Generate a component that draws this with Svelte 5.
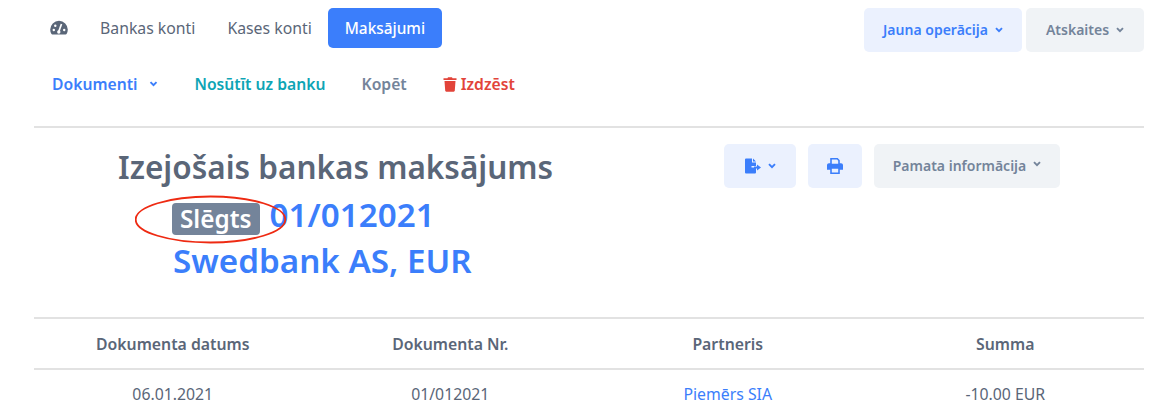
<script>
  const headers = ['Dokumenta datums', 'Dokumenta Nr.', 'Partneris', 'Summa'];
</script>

<div class="page">
  <nav class="top">
    <div class="tabs">
      <a class="tab icon-tab" href="#d" aria-label="Panelis">
        <svg width="18" height="16" viewBox="0 0 18 16"><path fill="#5a6678" d="M9 .8a8.800 8.800 0 0 0-8.800 8.800c0 1.700.45 3.200 1.250 4.500.2.300.5.500.9.500h13.300c.4 0 .7-.2.9-.5.8-1.300 1.250-2.800 1.250-4.500A8.800 8.800 0 0 0 9 .8z"/><circle cx="3.800" cy="10" r="1.200" fill="#fff"/><circle cx="5.300" cy="5.800" r="1.200" fill="#fff"/><circle cx="14.200" cy="10" r="1.200" fill="#fff"/><path d="M8.800 11.500 L11.500 4" stroke="#fff" stroke-width="1.700"/><circle cx="8.800" cy="12" r="1.700" fill="#fff"/></svg>
      </a>
      <a class="tab bank-tab" href="#b">Bankas konti</a>
      <a class="tab cash-tab" href="#k">Kases konti</a>
      <a class="tab active" href="#m">Maksājumi</a>
    </div>
    <div class="top-actions">
      <button class="btn light-blue wide"><span class="lift">Jauna operācija</span> <svg class="chev" width="8" height="6" viewBox="0 0 8 6"><path d="M1 1.200l3 3 3-3" fill="none" stroke="currentColor" stroke-width="1.900"/></svg></button>
      <button class="btn light-grey narrow"><span class="lift">Atskaites</span> <svg class="chev" width="8" height="6" viewBox="0 0 8 6"><path d="M1 1.200l3 3 3-3" fill="none" stroke="currentColor" stroke-width="1.900"/></svg></button>
    </div>
  </nav>

  <div class="subnav">
    <a href="#doc" class="blue">Dokumenti <svg class="chev doc" width="9" height="6" viewBox="0 0 8 6"><path d="M1 1.200l3 3 3-3" fill="none" stroke="currentColor" stroke-width="1.900"/></svg></a>
    <a href="#send" class="teal">Nosūtīt uz banku</a>
    <a href="#copy" class="grey">Kopēt</a>
    <a href="#del" class="red"><svg width="14" height="16" viewBox="0 0 14 16"><path fill="currentColor" d="M.5 2.300h4l.5-1.100h4l.5 1.100h4v1.700H.5zM1.500 5h11l-.7 9.600c0 .6-.5 1.100-1.100 1.100H3.300c-.6 0-1.100-.5-1.100-1.100z"/></svg>Izdzēst</a>
  </div>

  <section class="head">
    <div class="title">
      <h1>Izejošais bankas maksājums</h1>
      <div class="ref">
        <span class="badge">Slēgts</span>
        <a href="#n">01/012021</a>
        <svg class="ring" width="153" height="49" viewBox="0 0 153 49"><ellipse cx="75.500" cy="24.500" rx="74.800" ry="23" fill="none" stroke="#ee2a12" stroke-width="1.800"/></svg>
      </div>
      <div class="bank"><a href="#s">Swedbank AS, EUR</a></div>
    </div>
    <div class="head-actions">
      <button class="btn light-blue export" aria-label="Eksportēt">
        <svg width="17" height="16" viewBox="0 0 17 15"><path fill="currentColor" d="M0 1a1 1 0 0 1 1-1h6v4h4v3.500H6.500v1.500H11v5a1 1 0 0 1-1 1H1a1 1 0 0 1-1-1zM8 0l3 3H8zM12 6l4 3-4 3v-2H9V8h3z"/></svg>
        <svg class="chev" width="8" height="6" viewBox="0 0 8 6"><path d="M1 1.200l3 3 3-3" fill="none" stroke="currentColor" stroke-width="1.900"/></svg>
      </button>
      <button class="btn light-blue print" aria-label="Drukāt">
        <svg width="16" height="16" viewBox="0 0 15 15"><path fill="currentColor" fill-rule="evenodd" d="M3 0h7l2 2v3h1.200c1 0 1.800.8 1.800 1.800V11h-3v4H3v-4H0V6.800C0 5.800.8 5 1.800 5H3zM4.500 1.500V5.500h6V2.600L9.400 1.500zM4.500 10v3.500h6V10z"/></svg>
      </button>
      <button class="btn light-grey info"><span class="lift">Pamata informācija</span> <svg class="chev up" width="8" height="6" viewBox="0 0 8 6"><path d="M1 1.200l3 3 3-3" fill="none" stroke="currentColor" stroke-width="1.900"/></svg></button>
    </div>
  </section>

  <table>
    <thead>
      <tr>{#each headers as h}<th>{h}</th>{/each}</tr>
    </thead>
    <tbody>
      <tr>
        <td>06.01.2021</td>
        <td>01/012021</td>
        <td><a href="#p">Piemērs SIA</a></td>
        <td>-10.00 EUR</td>
      </tr>
    </tbody>
  </table>
</div>

<style>
  :global(body) {
    margin: 0;
    background: #fff;
    font-family: "Noto Sans", "Open Sans", sans-serif;
    color: #5a6678;
    overflow: hidden;
  }
  a { text-decoration: none; color: inherit; }
  .page { width: 1150px; height: 418px; padding: 8px 6px 0 34px; box-sizing: border-box; overflow: hidden; }
  .top { display: flex; justify-content: space-between; align-items: flex-start; }
  .tabs { display: flex; }
  .tab { height: 40px; padding: 0 17px; display: flex; align-items: center; font-size: 15.800px; border-radius: 5px; color: #5a6678; }
  .icon-tab { padding: 0 16px; }
  .bank-tab { padding: 0 16px; }
  .cash-tab { padding: 0 16px; }
  .active { background: #3b7efb; color: #fff; font-weight: 500; font-size: 15.400px; }
  .top-actions { display: flex; gap: 4px; }
  .btn { border: 0; border-radius: 5px; font: inherit; font-weight: 600; font-size: 14px; display: flex; align-items: center; justify-content: center; padding: 0; }
  .lift { margin-top: -2px; }
  .light-blue { background: #ebf1fe; color: #3b7efb; }
  .light-grey { background: #f0f3f6; color: #74849a; }
  .wide { width: 158px; height: 44px; gap: 7px; }
  .narrow { width: 118px; height: 44px; gap: 7px; }
  .subnav { display: flex; align-items: center; height: 34px; margin-top: 15px; font-size: 15.700px; font-weight: 600; padding-left: 18px; gap: 36px; }
  .subnav a { display: flex; align-items: center; }
  .blue { color: #3b7efb; }
  .teal { color: #0ea5b5; }
  .grey { color: #74849a; }
  .red { color: #e2443a; gap: 4px; }
  .doc { margin-left: 12px; }
  .head { border-top: 2px solid #e2e2e2; margin-top: 25px; height: 191px; display: flex; box-sizing: border-box; }
  .title { width: 606px; padding: 18px 0 0 84px; box-sizing: border-box; }
  h1 { margin: 0; font-size: 31.500px; line-height: 42px; font-weight: 600; color: #5a6678; }
  .ref, .bank { font-size: 33.200px; font-weight: 600; line-height: 46px; color: #3b7efb; padding-left: 55px; }
  .ref { position: relative; display: flex; align-items: center; height: 46px; margin-top: 4px; gap: 10px; }
  .badge { background: #74849a; color: #fff; font-size: 24.300px; border-radius: 4px; padding: 0 8px; line-height: 32px; margin: 7px 0 0 -1px; }
  .ring { position: absolute; left: 17px; top: 3px; }
  .head-actions { display: flex; gap: 12px; padding: 16px 0 0 84px; }
  .head-actions .btn { height: 44px; }
  .export { width: 72px; gap: 6px; }
  .print { width: 54px; }
  .info { width: 186px; gap: 7px; }
  .up { transform: translateY(-2px); }
  table { width: 1110px; border-collapse: collapse; table-layout: fixed; font-size: 15.800px; }
  th, td { text-align: center; }
  th { font-weight: 600; height: 46px; padding-top: 2px; box-sizing: content-box; border-top: 2px solid #e2e2e2; border-bottom: 2px solid #e2e2e2; color: #5a6678; }
  td { height: 46px; }
  td a { color: #3b7efb; }
</style>
